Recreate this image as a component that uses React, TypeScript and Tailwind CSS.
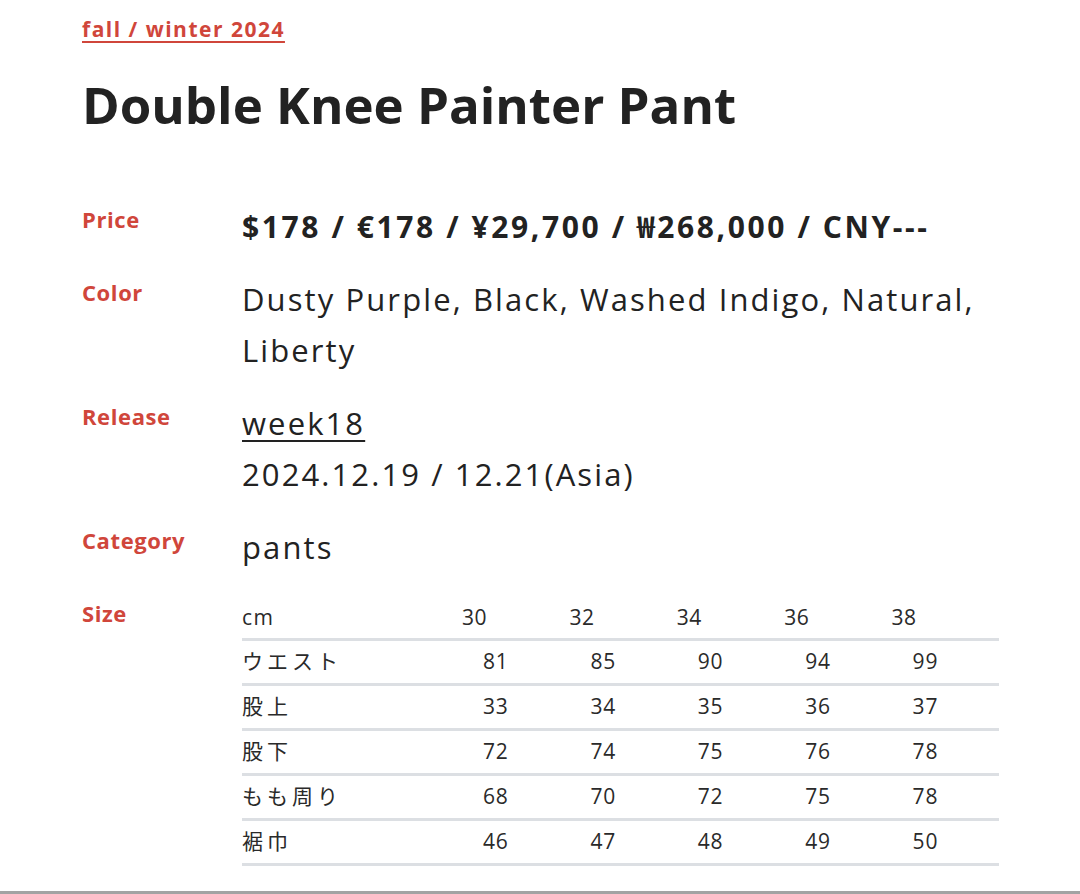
const sizes = ["30", "32", "34", "36", "38"];

const measurements: { label: string; values: string[] }[] = [
  { label: "ウエスト", values: ["81", "85", "90", "94", "99"] },
  { label: "股上", values: ["33", "34", "35", "36", "37"] },
  { label: "股下", values: ["72", "74", "75", "76", "78"] },
  { label: "もも周り", values: ["68", "70", "72", "75", "78"] },
  { label: "裾巾", values: ["46", "47", "48", "49", "50"] },
];

// ─── Spec row ────────────────────────────────────────────────────────────────

function SpecRow({ label, children }: { label: string; children: React.ReactNode }) {
  return (
    <div className="grid grid-cols-[160px_1fr]">
      <div className="text-[22px] font-bold leading-[36px] tracking-[0.6px] text-[#d0463b]">{label}</div>
      <div className="min-w-0">{children}</div>
    </div>
  );
}

// ─── Size table ──────────────────────────────────────────────────────────────

function SizeTable() {
  return (
    <div className="w-[757px] text-[21px] text-[#2a2a2a]">
      <div className="grid grid-cols-[220px_repeat(5,1fr)] h-[46px] pt-[2px] items-center border-b-[3px] border-[#dcdfe3]">
        <div className="tracking-[1.5px]">cm</div>
        {sizes.map((s) => (
          <div key={s} className="tracking-[0.5px]">{s}</div>
        ))}
      </div>
      {measurements.map((row) => (
        <div
          key={row.label}
          className="grid grid-cols-[220px_repeat(5,1fr)] h-[45px] items-center border-b-[3px] border-[#dcdfe3]"
        >
          <div className="tracking-[4px]">{row.label}</div>
          {row.values.map((v, i) => (
            <div key={i} className="pl-[21px] tracking-[0.8px]">
              {v}
            </div>
          ))}
        </div>
      ))}
    </div>
  );
}

// ─── Page ────────────────────────────────────────────────────────────────────

export default function App() {
  return (
    <div
      className="h-[894px] bg-white border-b-[3px] border-[#a3a3a3] pl-[82px] text-[#222]"
      style={{ fontFamily: "'Open Sans', 'Noto Sans CJK JP', sans-serif" }}
    >
      <div className="pt-[15px]">
        <a className="text-[21px] font-bold leading-[28px] tracking-[1.5px] text-[#d0463b] underline underline-offset-[4px] decoration-[2px]">
          fall / winter 2024
        </a>
      </div>

      <h1 className="mt-[29px] text-[51px] font-bold leading-[64px] text-[#222]">
        Double Knee Painter Pant
      </h1>

      <div className="mt-[65px] flex flex-col gap-[22px]">
        <SpecRow label="Price">
          <div className="text-[30px] font-bold leading-[51px] tracking-[2.6px]">
            $178 / €178 / ¥29,700 / ₩268,000 / CNY---
          </div>
        </SpecRow>

        <SpecRow label="Color">
          <div className="text-[31px] leading-[51px] tracking-[2.1px]">
            Dusty Purple, Black, Washed Indigo, Natural,
            <br />
            Liberty
          </div>
        </SpecRow>

        <SpecRow label="Release">
          <div className="text-[31px] leading-[51px] tracking-[2.1px]">
            <a className="underline underline-offset-[5px] decoration-[2px]">week18</a>
            <br />
            2024.12.19 / 12.21(Asia)
          </div>
        </SpecRow>

        <SpecRow label="Category">
          <div className="text-[31px] leading-[51px] tracking-[2.1px]">pants</div>
        </SpecRow>

        <SpecRow label="Size">
          <SizeTable />
        </SpecRow>
      </div>
    </div>
  );
}
